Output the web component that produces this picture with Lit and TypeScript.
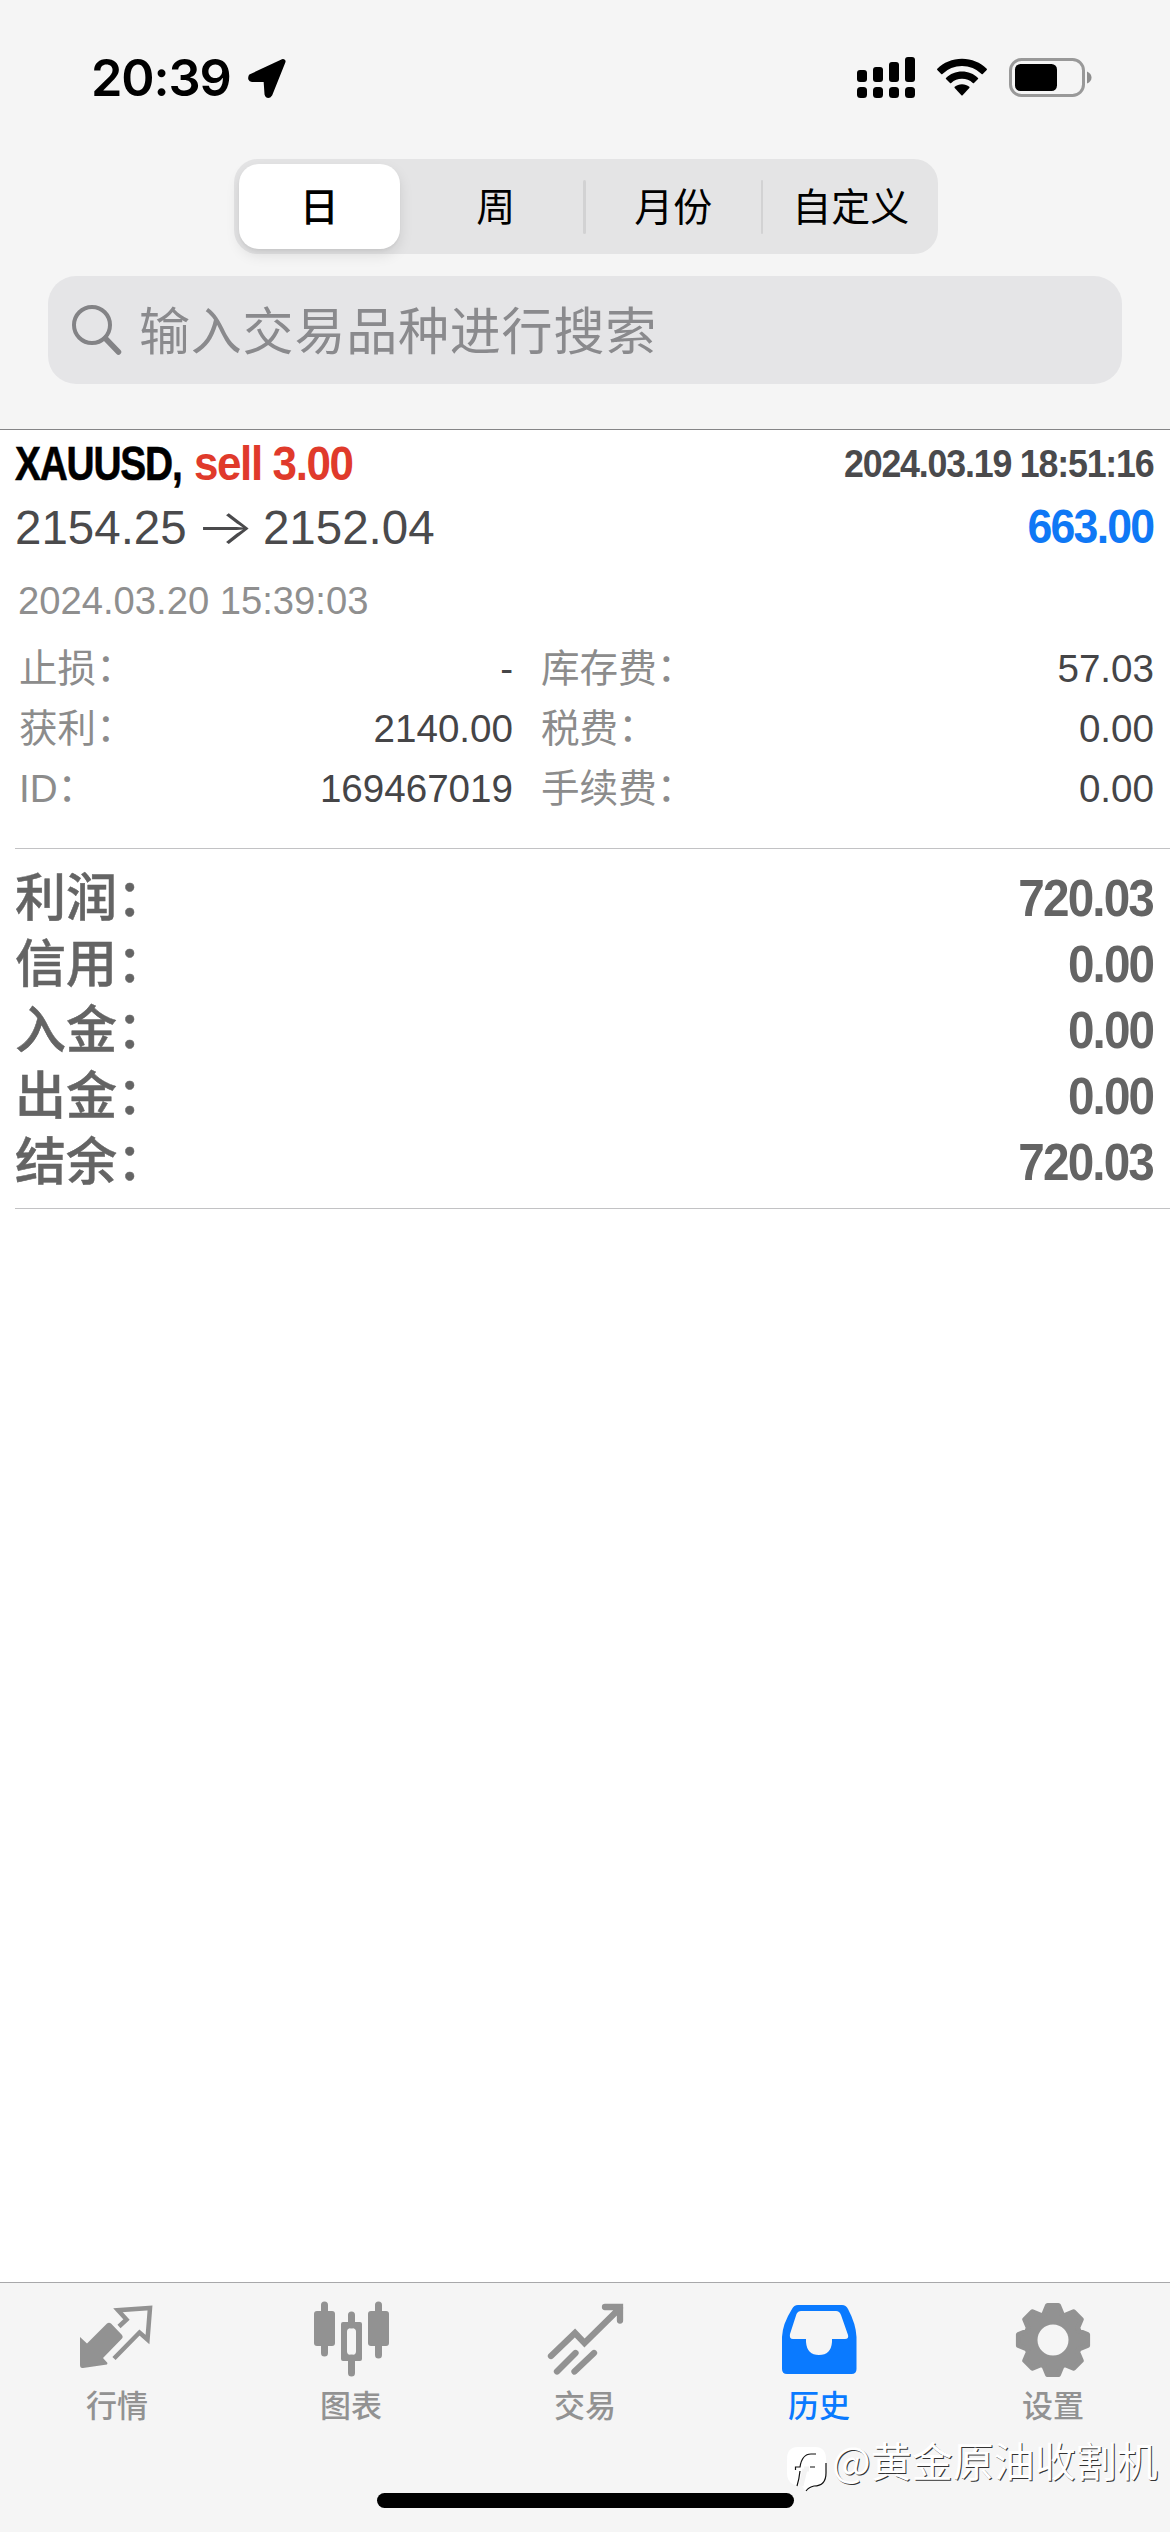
import { LitElement, html, css, svg } from "lit";
import { customElement, property } from "lit/decorators.js";

const SANS = css`"Liberation Sans", "Noto Sans CJK SC", sans-serif`;

@customElement("status-bar")
class StatusBar extends LitElement {
  static styles = css`
    :host { display: flex; align-items: flex-start; height: 159px; box-sizing: border-box; padding: 48px 78px 0 91px; font-family: Inter, sans-serif; }
    .time { font-size: 50.5px; font-weight: 600; line-height: 60px; letter-spacing: -1.1px; width: 156px; white-space: nowrap; }
    .spacer { flex: 1; }
    svg { display: block; margin-top: 8px; }
    .signal { margin-right: 22px; }
    .wifi { margin-right: 21px; }
  `;
  render() {
    return html`
      <div class="time">20:39</div>
      <svg width="40" height="46" viewBox="0 0 40 46"><path d="M36 5.500 L4 20.500 Q3 23.500 5 23.500 L19 23.500 L20 38 Q21 41 23 38 Z" fill="#000" stroke="#000" stroke-width="5" stroke-linejoin="round"/></svg>
      <div class="spacer"></div>
      <svg class="signal" width="58" height="46" viewBox="0 0 58 46">
        <rect x="0" y="14" width="10" height="12" rx="3"/><rect x="16" y="11" width="10" height="15" rx="3"/><rect x="32" y="6" width="10" height="20" rx="3"/><rect x="48" y="1" width="10" height="25" rx="3"/>
        ${[0, 16, 32, 48].map((x) => svg`<rect x=${x} y="31" width="10" height="11" rx="3.5"/>`)}
      </svg>
      <svg class="wifi" width="50" height="46" viewBox="0 0 50 46">
        <path d="M25 2.8C15.3 2.8 6.6 6.6 .3 12.8Q-.2 13.4 .3 14L4.2 17.9Q4.8 18.4 5.4 17.9A28.2 28.2 0 0 1 44.6 17.9Q45.2 18.4 45.8 17.9L49.7 14Q50.2 13.4 49.7 12.8C43.4 6.6 34.7 2.8 25 2.8Z"/>
        <path d="M25 15.6C18.8 15.6 13.2 18 9 21.9Q8.5 22.5 9 23.1L13 27Q13.6 27.5 14.2 27A16 16 0 0 1 35.8 27Q36.4 27.5 37 27L41 23.1Q41.5 22.5 41 21.9C36.8 18 31.2 15.6 25 15.6Z"/>
        <path d="M25 28.2C22.2 28.2 19.7 29.2 17.7 30.8Q17.2 31.4 17.7 32L24.4 39.2Q25 39.8 25.6 39.2L32.3 32Q32.8 31.4 32.3 30.8C30.3 29.2 27.8 28.2 25 28.2Z"/>
      </svg>
      <svg width="84" height="46" viewBox="0 0 84 46">
        <rect x="2.5" y="3.5" width="73" height="36" rx="11" fill="none" stroke="#999" stroke-width="3"/>
        <rect x="7" y="8" width="42" height="27" rx="5.5"/>
        <path d="M79 15.5Q83.5 17.5 83.5 21.5T79 27.5Z" fill="#8e8e8e"/>
      </svg>`;
  }
}

@customElement("period-picker")
class PeriodPicker extends LitElement {
  static styles = css`
    :host { display: flex; width: 704px; height: 95px; margin: 0 0 0 234px; box-sizing: border-box; padding: 0 0 0 5px; background: #e4e4e5; border-radius: 24px; align-items: center; font-family: ${SANS}; }
    .seg { width: 162px; height: 85px; margin-right: 7px; line-height: 88px; text-align: center; font-size: 39px; color: #000; white-space: nowrap; }
    .seg.active { background: #fff; border-radius: 20px; box-shadow: 0 6px 14px rgba(0,0,0,.1), 0 2px 3px rgba(0,0,0,.04); font-weight: 500; margin-right: 16px; }
    .sep { width: 3px; height: 54px; background: #d2d2d3; border-radius: 2px; margin-right: 7px; }
  `;
  render() {
    return html`<div class="seg active">日</div><div class="seg">周</div><div class="sep"></div><div class="seg">月份</div><div class="sep"></div><div class="seg">自定义</div>`;
  }
}

@customElement("search-field")
class SearchField extends LitElement {
  static styles = css`
    :host { display: flex; align-items: center; height: 108px; margin: 22px 48px 45px; padding-left: 24px; border-radius: 28px; background: #e5e5e7; font-family: ${SANS}; box-sizing: border-box; }
    .hint { margin-left: 17px; padding-top: 5px; font-size: 51px; letter-spacing: .8px; line-height: 103px; color: #8a8a8d; white-space: nowrap; }
  `;
  render() {
    return html`<svg width="50" height="52" viewBox="0 0 50 52" fill="none" stroke="#838386" stroke-linecap="round"><circle cx="20" cy="21" r="18" stroke-width="4"/><path d="M33.5 34.5L46.5 48" stroke-width="5.5"/></svg>
      <div class="hint">输入交易品种进行搜索</div>`;
  }
}

@customElement("detail-row")
class DetailRow extends LitElement {
  @property() label = "";
  @property() value = "";
  static styles = css`
    :host { display: flex; justify-content: space-between; height: 60px; line-height: 60px; font-family: ${SANS}; font-size: 38.6px; color: #454547; white-space: nowrap; }
    .label { color: #8c8c8c; font-size: 38.6px; }
    .colon { vertical-align: 1px; line-height: 0; font-family: "Noto Sans CJK SC", sans-serif; }
  `;
  render() {
    return html`<span class="label">${this.label}<span class="colon">：</span></span><span>${this.value}</span>`;
  }
}

@customElement("deal-card")
class DealCard extends LitElement {
  static styles = css`
    :host { display: block; height: 418px; box-sizing: border-box; padding: 2px 0 0 15px; font-family: ${SANS}; white-space: nowrap; color: #4a4a4c; }
    .line { display: flex; justify-content: space-between; padding-right: 15px; height: 63px; line-height: 63px; }
    .cond { display: inline-block; font-weight: 700; }
    .name { font-size: 48px; letter-spacing: -1.5px; color: #000; transform: scaleX(.81); transform-origin: 0 50%; -webkit-text-stroke: .6px #000; }
    .sell { font-size: 48px; letter-spacing: -1.5px; color: #e03a2b; margin-left: -27px; transform: scaleX(.915); transform-origin: 0 50%; }
    .opened { font-size: 39px; letter-spacing: -1.3px; margin-right: 2px; transform: scaleX(.917); transform-origin: 100% 50%; }
    .profit { font-size: 48px; letter-spacing: -1.9px; margin-right: 2px; color: #0f78f5; transform: scaleX(.93); transform-origin: 100% 50%; }
    .price { font-size: 47.5px; }
    .arrow { display: inline-block; font-family: Inter, sans-serif; font-weight: 300; font-size: 48px; margin: 0 2px; transform: scaleX(1.3); }
    .closed { font-size: 38.2px; color: #8f8f8f; height: 74px; line-height: 86px; padding-left: 3px; }
    .cols { display: grid; grid-template-columns: 494px 613px; column-gap: 28px; margin-top: 7px; padding-left: 4px; }
  `;
  render() {
    return html`
      <div class="line"><div><span class="cond name">XAUUSD,</span><span class="cond sell">sell 3.00</span></div><span class="cond opened">2024.03.19 18:51:16</span></div>
      <div class="line"><span class="price">2154.25 <span class="arrow">→</span> 2152.04</span><span class="cond profit">663.00</span></div>
      <div class="closed">2024.03.20 15:39:03</div>
      <div class="cols">
        <detail-row label="止损" value="-"></detail-row><detail-row label="库存费" value="57.03"></detail-row>
        <detail-row label="获利" value="2140.00"></detail-row><detail-row label="税费" value="0.00"></detail-row>
        <detail-row label="ID" value="169467019"></detail-row><detail-row label="手续费" value="0.00"></detail-row>
      </div>`;
  }
}

@customElement("totals-list")
class TotalsList extends LitElement {
  static styles = css`
    :host { display: block; margin-left: 15px; padding: 17px 15px 12px 0; border-top: 1px solid #c2c2c4; border-bottom: 1px solid #c2c2c4; font-family: ${SANS}; color: #646464; }
    .row { display: flex; justify-content: space-between; height: 66px; line-height: 66px; white-space: nowrap; }
    .label { font-size: 51px; font-weight: 500; -webkit-text-stroke: .5px #646464; }
    .colon { vertical-align: 0; line-height: 0; }
    .value { display: inline-block; font-size: 51px; font-weight: 700; letter-spacing: -2px; margin-right: 2px; transform: scaleX(.935); transform-origin: 100% 50%; }
  `;
  render() {
    const rows = [["利润", "720.03"], ["信用", "0.00"], ["入金", "0.00"], ["出金", "0.00"], ["结余", "720.03"]];
    return rows.map(([l, v]) => html`<div class="row"><span class="label">${l}<span class="colon">：</span></span><span class="value">${v}</span></div>`);
  }
}

const gear = () => {
  const pts: string[] = [];
  for (let i = 0; i < 8; i++) {
    for (const [r, d] of [[27.5, -19], [35, -9], [35, 9], [27.5, 19]]) {
      const a = ((i * 45 + d) * Math.PI) / 180;
      pts.push(`${(38 + r * Math.sin(a)).toFixed(1)} ${(38 - r * Math.cos(a)).toFixed(1)}`);
    }
  }
  return `M${pts.join("L")}Z`;
};

const icons = {
  quotes: svg`<g transform="translate(0 2)"><path d="M1 33L8 39.500L28 19.500Q30 17.800 32 19.500L43 31Q44.500 33 43 34.500L24 54L28.500 59L28 60.500L4 64Q1 64.500 1 61Z"/>
    <path d="M40 22.500L47.500 15.500L39 6.200L71 4L68.500 35.500L60.500 28.500L35 54.500" fill="none" stroke="currentColor" stroke-width="4.500"/></g>`,
  charts: svg`<g transform="translate(0 1)"><rect x="1" y="8" width="21" height="35" rx="3"/><path d="M11.500 2V50M65.500 2V52M38.500 12V22M38.500 55V70" stroke="currentColor" stroke-width="7" stroke-linecap="round"/><rect x="55" y="8" width="21" height="35" rx="3"/><path fill-rule="evenodd" d="M30 19h17q2 0 2 2v35q0 2-2 2h-17q-2 0-2-2v-35q0-2 2-2ZM38.500 25q-4.500 0-4.500 3.500v20q0 3.500 4.500 3.500t4.500-3.500v-20q0-3.500-4.500-3.500Z"/></g>`,
  trade: svg`<path d="M4 54L28 31L37.500 41L73 6M58 5H73V18.500M10 69.500L28.500 51M27.500 69.500L47 51" fill="none" stroke="currentColor" stroke-width="6.300" stroke-linecap="round"/>`,
  history: svg`<path fill-rule="evenodd" d="M17 3H61Q65 3 67 7Q75 22 75.500 35V67Q75.500 72 70.500 72H6Q1 72 1 67V35Q1.500 22 11 7Q13 3 17 3ZM20 9Q17 9 15.500 12L9 32Q8 37 12 37H25V40Q26 53 38 53T51 40V37H64Q68 37 67 33L60 13Q58.500 9 55 9Z"/>`,
  settings: svg`<path d=${gear()} stroke="currentColor" stroke-width="5" stroke-linejoin="round"/><circle cx="38" cy="38" r="15.500" fill="#f5f5f5"/>`,
};

@customElement("tab-bar")
class TabBar extends LitElement {
  static styles = css`
    :host { display: flex; height: 250px; box-sizing: border-box; border-top: 1px solid #a8a8aa; background: #f5f5f5; font-family: ${SANS}; position: relative; }
    .tab { flex: 1; display: flex; flex-direction: column; align-items: center; padding-top: 19px; color: #929292; font-size: 31px; font-weight: 500; line-height: 40px; }
    .tab svg { display: block; fill: currentColor; margin-bottom: 9px; overflow: visible; }
    .tab.active { color: #0a7aff; }
    .home { position: absolute; left: 377px; top: 210px; width: 417px; height: 15px; border-radius: 8px; background: #000; }
    .mark { position: absolute; left: 786px; top: 148px; display: flex; align-items: flex-start; color: #fff; font-size: 41px; line-height: 56px; white-space: nowrap; text-shadow: 1px 1px 0 #333; font-family: "Noto Sans CJK SC", sans-serif; }
    .mark svg { margin: 15px 5px 0 0; }
  `;
  render() {
    const tabs: [keyof typeof icons, string][] = [["quotes", "行情"], ["charts", "图表"], ["trade", "交易"], ["history", "历史"], ["settings", "设置"]];
    return html`${tabs.map(([k, t]) => html`<div class="tab ${k === "history" ? "active" : ""}"><svg width="76" height="76" viewBox="0 0 76 76">${icons[k]}</svg>${t}</div>`)}
      <div class="home"></div>
      <div class="mark"><svg width="41" height="48" viewBox="0 0 41 48">
        <path d="M12 1H29Q40 1 40 13V27Q40 40 28 40L20 46L16 40Q1 40 1 27V13Q1 1 12 1Z" fill="#fff"/>
        <path d="M18 23H23M19 23L15 40" fill="none" stroke="#f3f3f3" stroke-width="5"/>
        <path d="M9.500 24V21H14Q16 8 25 8H30M24 21H29M14 25Q13 34 11 40M40 17V27Q40 40 28 40Q23 41 20 45" fill="none" stroke="#111" stroke-width="1.200"/></svg><span>@黄金原油收割机</span></div>`;
  }
}

@customElement("app-root")
class AppRoot extends LitElement {
  static styles = css`
    :host { display: flex; flex-direction: column; width: 1170px; height: 2532px; overflow: hidden; background: #fff; color: #000; }
    .header { background: #f5f5f5; border-bottom: 1px solid #858587; height: 429px; flex: none; }
    .rest { flex: 1; }
  `;
  render() {
    return html`<div class="header"><status-bar></status-bar><period-picker></period-picker><search-field></search-field></div>
      <deal-card></deal-card><totals-list></totals-list><div class="rest"></div><tab-bar></tab-bar>`;
  }
}
